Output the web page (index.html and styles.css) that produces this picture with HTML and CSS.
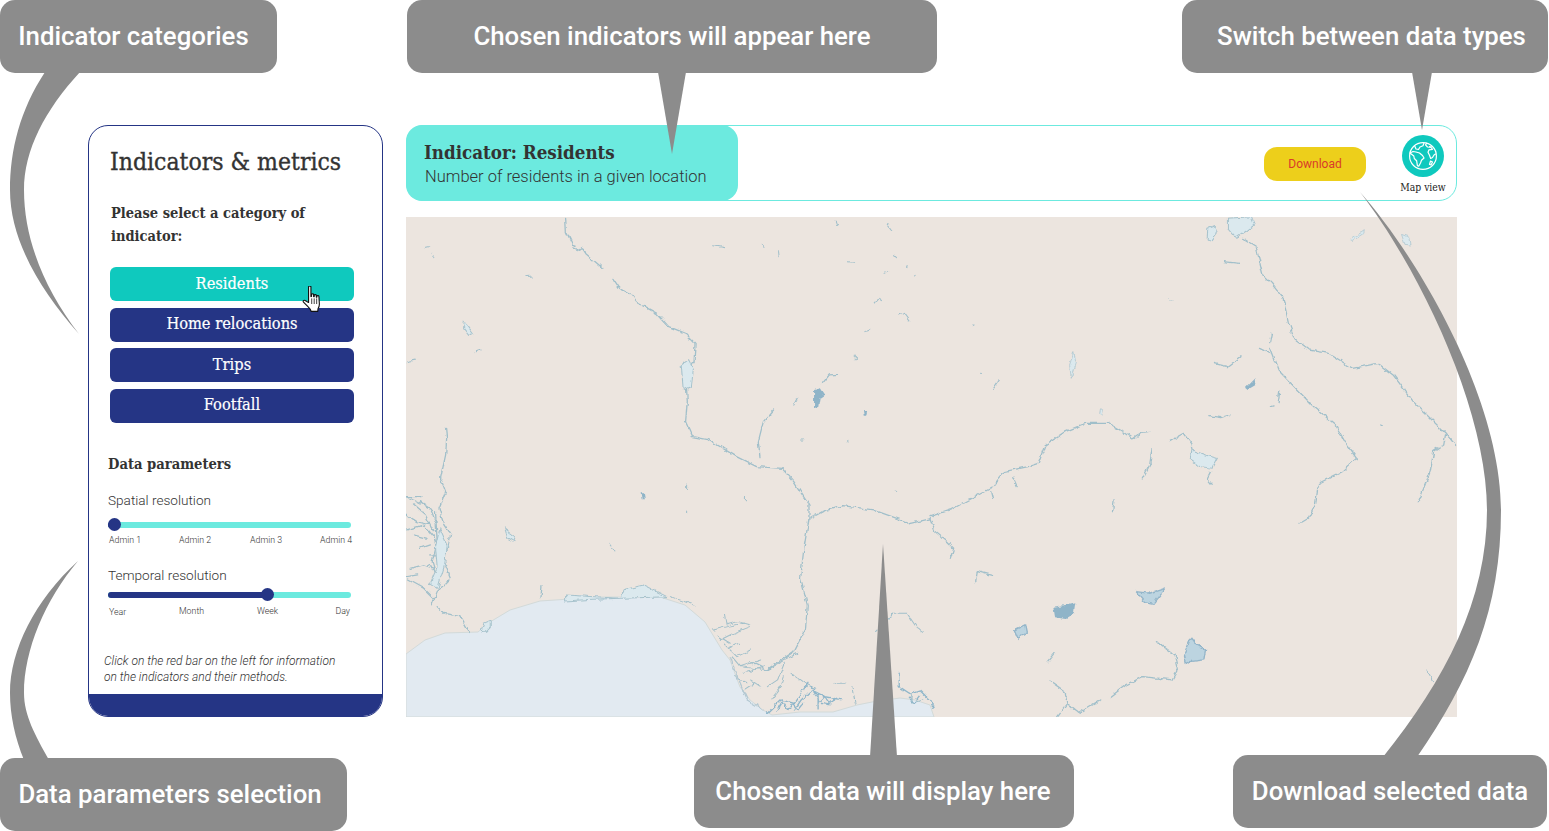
FILE: index.html
```html
<!DOCTYPE html>
<html lang="en">
<head>
  <meta charset="UTF-8">
  <meta name="viewport" content="width=device-width, initial-scale=1.0">
  <title>Indicators and metrics - Guide</title>
  <link rel="stylesheet" href="styles.css">
</head>
<body>

<div class="page">

  <!-- Sidebar -->
  <aside class="sidebar">
    <h1 class="sidebar-title">Indicators &amp; metrics</h1>
    <p class="prompt">Please select a category of indicator:</p>

    <div class="category-list">
      <button class="category active">Residents</button>
      <button class="category">Home relocations</button>
      <button class="category">Trips</button>
      <button class="category">Footfall</button>
      <svg class="hand-cursor" viewBox="1 1 17 24" width="21" height="27">
        <path d="M6 1.800c0-1.200 2.100-1.200 2.100 0v8.600l.5-.100V8.700c0-1.100 1.900-1.100 1.900 0v1.800l.5.100V9.500c0-1.100 1.900-1.100 1.900 0v1.400l.5.100v-.7c0-1.100 1.800-1.100 1.800 0l.4 6.500c.1 2.200-.5 3.300-1.200 4.400l-.2 2.300H8.300c-.4-2-1.700-3.200-3.300-4.700l-3.500-3.500c-.8-1 .3-2 1.400-1.500L6 15.600z" fill="#fff" stroke="#111" stroke-width="1" stroke-linejoin="round"/>
        <path d="M8.800 12v5M11 12v5M13.200 12v5" stroke="#111" stroke-width=".7" fill="none"/>
      </svg>
    </div>

    <h2 class="params-title">Data parameters</h2>

    <p class="param-label">Spatial resolution</p>
    <div class="slider slider-first"><div class="slider-fill" style="width: 6px"></div></div>
    <div class="ticks ticks-spatial">
      <span>Admin 1</span><span>Admin 2</span><span>Admin 3</span><span>Admin 4</span>
    </div>

    <p class="param-label param-label-second">Temporal resolution</p>
    <div class="slider slider-second"><div class="slider-fill" style="width: 159px"></div></div>
    <div class="ticks ticks-temporal">
      <span class="tick-low">Year</span><span>Month</span><span>Week</span><span>Day</span>
    </div>

    <p class="note">Click on the red bar on the left for information<br>on the indicators and their methods.</p>
    <div class="sidebar-footer"></div>
  </aside>

  <!-- Main column -->
  <main class="main">
    <header class="topbar">
      <div class="indicator-box">
        <h2>Indicator: Residents</h2>
        <p>Number of residents in a given location</p>
      </div>
      <button class="download">Download</button>
      <div class="view-switch">
        <span class="globe">
          <svg viewBox="0 0 30 30" width="30" height="30" fill="none" stroke="#fff" stroke-width="1.200" stroke-linejoin="round">
            <circle cx="15" cy="15" r="13.400"/>
            <path d="M6.500 4.500l1.500 3.500 2.500.5 1.500-2.500 3-1.200 1-2.800"/>
            <path d="M2 12l3-1.500 3 .5 3.500 1 3 2.500 1.500 2.500-2.500 2.200-1 2.800-1.800 3.200-1.300-.5-.8-5-2.300-2.200-.5-2.500z"/>
            <path d="M19 1.800l-1.500 2 2 2.200 3.500.3 1.500 2-3.500.5-1 2.500 1.500 3 1.200 3.200 1.800-1 1.500-2.500 1.800-1.200"/>
            <path d="M21 5.500l3-.5"/>
            <path d="M22.500 20l2 1-1.500 3-1.500-.5z"/>
          </svg>
        </span>
        <span class="view-label">Map view</span>
      </div>
    </header>

    <div class="map">
      <svg viewBox="406 217 1051 500" width="1051" height="500" preserveAspectRatio="none">
        <defs>
          <filter id="rough" filterUnits="userSpaceOnUse" x="406" y="217" width="1051" height="500" color-interpolation-filters="sRGB">
            <feTurbulence type="fractalNoise" baseFrequency=".16" numOctaves="2" seed="4" result="noise"/>
            <feDisplacementMap in="SourceGraphic" in2="noise" scale="5" xChannelSelector="R" yChannelSelector="G"/>
            <feGaussianBlur stdDeviation=".5"/>
          </filter>
        </defs>
        <path class="sea" d="M406 654L425 640 445 633 478 632 490 622 510 610 540 601 600 597 660 597 685 605 705 622 722 650 730 660 740 687 750 700 763 710 772 715 800 712 833 712 857 705 872 702 900 698 915 700 930 705 934 717 406 717z"/>

        <g filter="url(#rough)">
          <!-- traced from the left half of the map -->
          <g transform="translate(400 215) scale(.338 .3333)">
            <path class="river" d="M490 10l2 40 18 38 8 2-6 8 20 8 8-6 10 16 50 44M630 190l20 30 30 15 20 27 60 33 35 40 50 20 28 30-3 55-25 30 5 90-5 60 20 45 50 10 80 50 60 30 75 5 35 40 45 70 0 40-15 90-10 90 20 80-5 70-35 70-80 55-50-25"/>
            <path class="river" d="M1215 910l35-20 60-18 90 13 70 25 40 15 58-13"/>
            <path class="river" d="M135 640l3 30-3 50-15 70 15 40-20 50 15 50 20 30-20 80 20 50-40 40-15 40M20 845h45M40 870l35 30 25 50M20 945l50-15 30 35 10 35M85 1020h35l10 30M25 1095l45 25 30 30M105 890l5 90-15 60 15 50M60 860l30 20 15 40M20 900l30 20 40 10M40 960l40 10M60 1000l30-10M30 1060l40-10 30 10M22 1085l30-5"/>
            <path class="lake" d="M118 940l22 50-8 60-20 70-22-15 20-50-5-60z"/>
            <path class="lake" d="M832 450l22-16 14 30-6 50-24 10z"/>
            <path class="river" d="M110 1175l20 20 50 10 25 45M420 1115l-3 30M1105 585l-30 35-15 60 5 45M1165 570l10-20M1250 505l20-25 25-2"/>
            <path class="lake" d="M240 1250l8-25 22-10 0 20-14 15zM490 1140l160 10 10-25 60-15 70 35-90 3-130 5-80 5z"/>
            <path class="river thin" d="M870 1170l-70-25M960 1200l5 30 35-10 35 10M1410 1250l50-55h40l30 45 15 10"/>
            <g transform="translate(887 1215)">
              <path class="river thin" d="M40 30l40-10 50-10M60 60l40-20 50-20M70 70l40 40 40-20M95 110l25 30 60-20M120 140l80 10 50-30 40-20M130 160l60-20M100 170l40 20M130 210l30-20M200 200l30-20 20-50M210 240l30-40 10-30M400 190h30M450 200l10 50M270 160l40 30 30 15M625 220l5 30 30-10M50 45l40 25M85 85l30-15M150 180l30 20"/>
              <path class="river delta" d="M200 280l40-40 40 10 40-60M280 270l20-30 30-30 40 20 50 10M330 200l20 30v40M590 160v40l30 20 30-10 30 30 10 20M230 270l15-25 15 25 15-20 15 20 15-20M340 225l15 20 15-15 15 20 20-15M360 250l25 5M620 235l15 15 15-20"/>
              <path class="river coast" d="M90 110l20 60 30 70 50 30"/>
            </g>
            <path class="river thin" d="M75 98l13-3M95 115l5 13M372 185l20-2M925 92l35 6M1070 88l10 9M1120 110l2 18M1290 18l5 14M1440 25l15 20M1325 140l20 2M1460 122l6 6M1435 172l8-4M1500 155l3 3M1525 183l2-2M1405 265l15-18 5 15M1475 300l15-8 20 28M1378 350l12-5M1347 420v14M1185 675h10M1322 678v5M1465 825l6 2M225 410l15-5M20 440l25-5M848 810v12M848 885v10M1022 845v12M618 985l15 20M20 845l40 20"/>
            <path class="blob" d="M1225 525l20-5 12 18-15 10-5 30-12-5zM1370 588h12l-3 14h-7zM712 835h10l3 18h-10z"/>
            <path class="lake" d="M190 320l25 35-12 6-15-20zM310 940l32 25-5 15-18-10z"/>
          </g>

          <!-- traced from the right half of the map -->
          <g transform="translate(930 215) scale(.338 .3333)">
            <path class="river" d="M0 905l60-20 120-65 40-50 70-15 30-10 20-55 60-40 60-25 70 0 40 25 30 22 25-17 25-3M0 910l15 40 30 25 25 25-10 30"/>
            <path class="river" d="M925 70l40 25 20 85 25 25 35 45 15 70 20 55 40 30 60 10 70 45 75-15 45 35 60 80 95 95 30 35"/>
            <path class="river" d="M1005 400l25 65 100 105 70 60 30 55 32 45-42 40-70 35-10 65-20 40-25 15M1525 660l-5 30-30 20-10 60-35 90"/>
            <path class="river" d="M712 677l38-22 25 35 5 20M830 770l-10 20 12 15M657 700l-7 50-22 42M840 445l40 10 40-30M975 400l30 15M1010 355l-5 25M1035 530l-5 30M1010 575l8-2M825 602l35 6 25-8M185 525l20-30M245 785l13 30M180 830l5 20M545 855l-5 35M135 1100l5-30 45 12M670 1280l55 40 10 40-20 35-85-10-50 25-45 35M505 1455l-65 40-35-30-5-35-45-32M405 1465l-30 40M370 1315l-20 25M870 140l45 5M710 255l8 2M125 332l5-2M150 472l3 2M1330 630l8 2"/>
            <path class="lake" d="M880 10l70-5 10 25-20 15-35 25-25-30zM822 40l20-8 8 25-15 20-15-5zM775 705l40 15 35 10-15 30-35-5-30-20z"/>
            <path class="lake narrow" d="M425 410l8 35-15 45-5-40zM1245 72l40-28-2 12-30 20zM505 578l8 5-5 20-6-8zM1395 58l25 10 3 22-18-2z"/>
            <path class="river thin" d="M1470 1365l20 35"/>
            <path class="blob" d="M935 515l25-25 3 20-20 12zM365 1175l35-5 30-8-5 35-25 15-30-5z"/>
            <path class="lake dark" d="M250 1245l30-15 5 25-25 15zM610 1130l40 5 45-15-35 45-25-5zM750 1320l15-40 10-10 15 20 25 15-5 30-40 5-15 5z"/>
          </g>
        </g>
      </svg>
    </div>
  </main>

  <!-- Callouts laid over the app -->
  <svg class="tails" viewBox="0 0 1549 831" width="1549" height="831">
    <path d="M45 72C20 110 10 150 10 190 10 240 40 290 79 334 45 290 24 240 24 190 24 150 45 110 80 72z"/>
    <path d="M78 561C35 600 10 650 10 693 10 715 15 738 24 760H49C35 735 24 715 24 693 24 650 45 600 78 561z"/>
    <path d="M658 72H686L672 154z"/>
    <path d="M1412 72H1432L1422 130z"/>
    <path d="M870 757H897L883 544z"/>
    <path d="M1360 192C1420 260 1501 400 1501 510 1501 610 1470 680 1417 757H1383C1445 680 1487 600 1487 510 1487 410 1420 270 1360 192z"/>
  </svg>
  <div class="callout callout-categories">Indicator categories</div>
  <div class="callout callout-chosen">Chosen indicators will appear here</div>
  <div class="callout callout-switch">Switch between data types</div>
  <div class="callout callout-params">Data parameters selection</div>
  <div class="callout callout-display">Chosen data will display here</div>
  <div class="callout callout-download">Download selected data</div>

</div>

</body>
</html>
```

FILE: styles.css
```css
/* Global Styling */
* {
  box-sizing: border-box;
  margin: 0;
  padding: 0;
}
body {
  font-family: Roboto, sans-serif;
  background-color: #fff;
  color: #333;
  overflow: hidden;
}
.page {
  position: relative;
  display: flex;
  gap: 23px;
  width: 1549px;
  height: 831px;
  padding: 125px 0 0 88px;
}

/* Sidebar */
.sidebar {
  display: flex;
  flex-direction: column;
  width: 295px;
  height: 592px;
  padding: 21px 0 0;
  border: 1px solid #253585;
  border-radius: 20px;
  overflow: hidden;
}
.sidebar-title, .prompt, .category, .params-title, .indicator-box h2, .view-label {
  font-family: "DejaVu Serif", "Liberation Serif", serif;
  font-stretch: condensed;
}
.sidebar-title {
  margin-left: 21px;
  font-size: 24.500px;
  line-height: 30px;
  font-weight: normal;
  -webkit-text-stroke: .35px #333;
  color: #333;
}
.prompt {
  width: 230px;
  margin: 24px 0 0 22px;
  font-size: 14.500px;
  line-height: 23px;
  font-weight: bold;
}
.category-list {
  position: relative;
  display: flex;
  flex-direction: column;
  gap: 6.67px;
  width: 244px;
  margin: 20px 0 0 21px;
}
.category {
  height: 34px;
  padding-bottom: 2px;
  border: none;
  border-radius: 6px;
  background-color: #253585;
  color: #fff;
  font-size: 16.300px;
  -webkit-text-stroke: .2px #fff;
  cursor: pointer;
}
.category.active {
  background-color: #0fc9be;
}
.hand-cursor {
  position: absolute;
  left: 192px;
  top: 19px;
}
.params-title {
  margin: 31px 0 0 19px;
  font-size: 14.600px;
  line-height: 20px;
  font-weight: bold;
}
.param-label {
  margin: 17px 0 0 19px;
  font-size: 13.600px;
  line-height: 18px;
  font-weight: 300;
}
.param-label-second {
  margin-top: 20px;
}

/* Sliders */
.slider {
  width: 243px;
  height: 6px;
  margin: 13px 0 0 19px;
  border-radius: 3px;
  background-color: #6ceadf;
}
.slider-second {
  margin-top: 8px;
}
.slider-fill {
  position: relative;
  height: 6px;
  border-radius: 3px;
  background-color: #253585;
}
.slider-fill::after {
  content: "";
  position: absolute;
  right: -6.500px;
  top: -3.500px;
  width: 13px;
  height: 13px;
  border-radius: 50%;
  background-color: #253585;
}
.ticks {
  display: grid;
  width: 243px;
  margin: 6px 0 0 20px;
  font-size: 8.800px;
  line-height: 12px;
  font-weight: 300;
  white-space: nowrap;
}
.ticks span:last-child {
  justify-self: end;
}
.ticks-spatial {
  grid-template-columns: 70px 71px 70px 1fr;
}
.ticks-temporal {
  grid-template-columns: 70px 78px 78px 1fr;
  width: 241px;
  margin-top: 7px;
}
.tick-low {
  transform: translateY(1px);
}
.note {
  margin: 36px 0 0 15px;
  font-size: 12px;
  line-height: 16px;
  font-weight: 300;
  font-style: italic;
}
.sidebar-footer {
  height: 22px;
  margin-top: auto;
  background-color: #253585;
}

/* Main column */
.main {
  display: flex;
  flex-direction: column;
  gap: 16px;
  width: 1051px;
}
.topbar {
  display: flex;
  align-items: center;
  height: 76px;
  border: 1px solid #6ceadf;
  border-radius: 18px;
}
.indicator-box {
  width: 332px;
  height: 76px;
  flex-shrink: 0;
  margin-left: -1px;
  padding: 16px 0 0 18px;
  border-radius: 16px;
  background-color: #6ceadf;
}
.indicator-box h2 {
  font-size: 18.600px;
  line-height: 24px;
  font-weight: bold;
}
.indicator-box p {
  margin: 0 0 0 1px;
  font-size: 16.500px;
  line-height: 24px;
  font-weight: 300;
}
.download {
  width: 102px;
  height: 34px;
  margin: 2px 0 0 526px;
  border: none;
  border-radius: 13px;
  background-color: #edcf1b;
  color: #d93a2a;
  font-family: Roboto, sans-serif;
  font-size: 12px;
  cursor: pointer;
}
.view-switch {
  display: flex;
  flex-direction: column;
  align-items: center;
  width: 60px;
  margin-left: 27px;
}
.globe {
  display: flex;
  align-items: center;
  justify-content: center;
  width: 42px;
  height: 42px;
  margin-top: 3px;
  border-radius: 50%;
  background-color: #0fc9be;
}
.view-label {
  margin-top: 3px;
  font-size: 10.300px;
  line-height: 14px;
  color: #222;
}

/* Map */
.map {
  width: 1051px;
  height: 500px;
  background-color: #ece5df;
}
.map svg {
  display: block;
}
.sea {
  fill: #e2eaf1;
  stroke: #d3dad9;
  stroke-width: 1;
}
.river {
  fill: none;
  stroke: #a0bfca;
  stroke-width: 3.800;
  stroke-linejoin: round;
  stroke-linecap: round;
}
.river.thin {
  stroke-width: 3;
}
.river.delta {
  stroke: #8fb6ca;
  stroke-width: 4;
}
.river.coast {
  stroke: #b3c8d2;
}
.lake {
  fill: #dbe9ee;
  stroke: #a6c2cc;
  stroke-width: 3;
}
.lake.narrow {
  stroke-width: 2;
}
.lake.dark {
  fill: #bcd4e0;
  stroke: #93b5c9;
  stroke-width: 4;
}
.blob {
  fill: #8fb4c8;
}

/* Callouts */
.tails {
  position: absolute;
  left: 0;
  top: 0;
  pointer-events: none;
}
.tails path {
  fill: #8c8c8c;
}
.callout {
  position: absolute;
  height: 73px;
  border-radius: 15px;
  background-color: #8c8c8c;
  color: #fff;
  font-size: 25.800px;
  font-weight: 500;
  line-height: 73px;
  text-align: center;
  white-space: nowrap;
}
.callout-categories {
  left: 0;
  top: 0;
  width: 277px;
  padding-right: 10px;
}
.callout-chosen {
  left: 407px;
  top: 0;
  width: 530px;
}
.callout-switch {
  left: 1182px;
  top: 0;
  width: 366px;
  padding-left: 13px;
}
.callout-params {
  left: 0;
  top: 758px;
  width: 347px;
  padding-right: 7px;
}
.callout-display {
  left: 694px;
  top: 755px;
  width: 380px;
  padding-right: 2px;
}
.callout-download {
  left: 1233px;
  top: 755px;
  width: 314px;
}
```
